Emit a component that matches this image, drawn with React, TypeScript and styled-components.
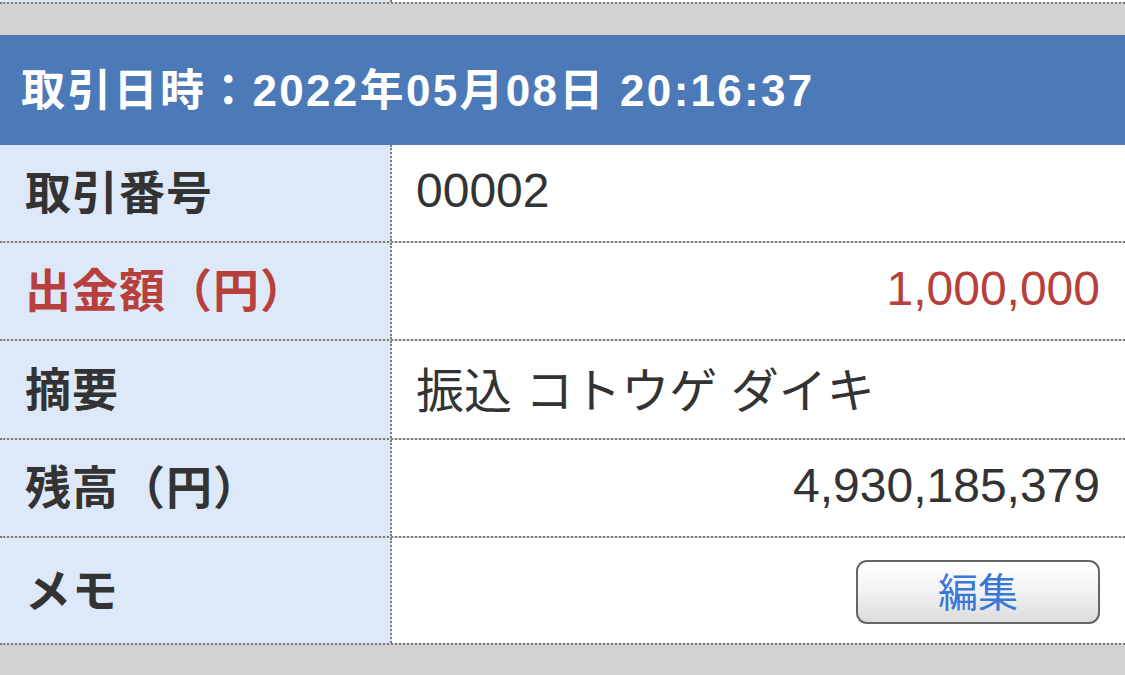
import React from "react";
import styled, { createGlobalStyle } from "styled-components";

const Global = createGlobalStyle`
  html, body { margin: 0; padding: 0; }
  body {
    background: #d3d3d3;
    font-family: "Liberation Sans", "Noto Sans CJK JP", sans-serif;
    color: #333;
    width: 1125px;
    height: 675px;
    overflow: hidden;
  }
`;

const Page = styled.div`
  display: flex;
  flex-direction: column;
`;

const PrevRow = styled.div`
  display: grid;
  grid-template-columns: 392px 1fr;
  height: 2px;
  border-bottom: 2px dotted #7c7c7c;
  margin-bottom: 31px;
`;

const PrevLabel = styled.div`
  background: #dde9f8;
  border-right: 2px dotted #7c7c7c;
`;

const PrevValue = styled.div`
  background: #fff;
`;

const Header = styled.div`
  background: #4c7ab9;
  height: 110px;
  display: flex;
  align-items: center;
  padding: 0 0 6px 21px;
  box-sizing: border-box;
  color: #fff;
  font-weight: 700;
  font-size: 44px;
  letter-spacing: 2.3px;
`;

const Row = styled.div<{ $h: number }>`
  display: grid;
  grid-template-columns: 392px 1fr;
  height: ${(p) => p.$h}px;
  border-bottom: 2px dotted #7c7c7c;
`;

const Label = styled.div<{ $red?: boolean }>`
  background: #dde9f8;
  border-right: 2px dotted #7c7c7c;
  display: flex;
  align-items: center;
  padding: 0 0 8px 25px;
  font-weight: 700;
  font-size: 46px;
  letter-spacing: 1px;
  color: ${(p) => (p.$red ? "#b8403c" : "#333")};
`;

const Value = styled.div<{ $align?: "left" | "right"; $red?: boolean }>`
  background: #fff;
  display: flex;
  align-items: center;
  justify-content: ${(p) => (p.$align === "right" ? "flex-end" : "flex-start")};
  padding: 0 25px 5px 24px;
  font-size: 48px;
  color: ${(p) => (p.$red ? "#b8403c" : "#333")};
`;

const MemoValue = styled(Value)`
  padding-bottom: 0;
`;

const EditButton = styled.button`
  width: 244px;
  height: 64px;
  border: 2px solid #666;
  border-radius: 11px;
  background: linear-gradient(to bottom, #ffffff 0%, #f4f4f4 45%, #dcdcdc 100%);
  color: #3a78d8;
  font-family: "Liberation Sans", "Noto Sans CJK JP", sans-serif;
  font-size: 40px;
  padding: 0 0 3px;
  display: flex;
  align-items: center;
  justify-content: center;
  margin-top: 2px;
`;

export default function App() {
  return (
    <Page>
      <Global />
      <PrevRow>
        <PrevLabel />
        <PrevValue />
      </PrevRow>
      <Header>取引日時：2022年05月08日 20:16:37</Header>
      <Row $h={96}>
        <Label>取引番号</Label>
        <Value>00002</Value>
      </Row>
      <Row $h={96}>
        <Label $red>出金額（円）</Label>
        <Value $align="right" $red>1,000,000</Value>
      </Row>
      <Row $h={97}>
        <Label>摘要</Label>
        <Value>振込 コトウゲ ダイキ</Value>
      </Row>
      <Row $h={96}>
        <Label>残高（円）</Label>
        <Value $align="right">4,930,185,379</Value>
      </Row>
      <Row $h={105}>
        <Label>メモ</Label>
        <MemoValue $align="right">
          <EditButton>編集</EditButton>
        </MemoValue>
      </Row>
    </Page>
  );
}
